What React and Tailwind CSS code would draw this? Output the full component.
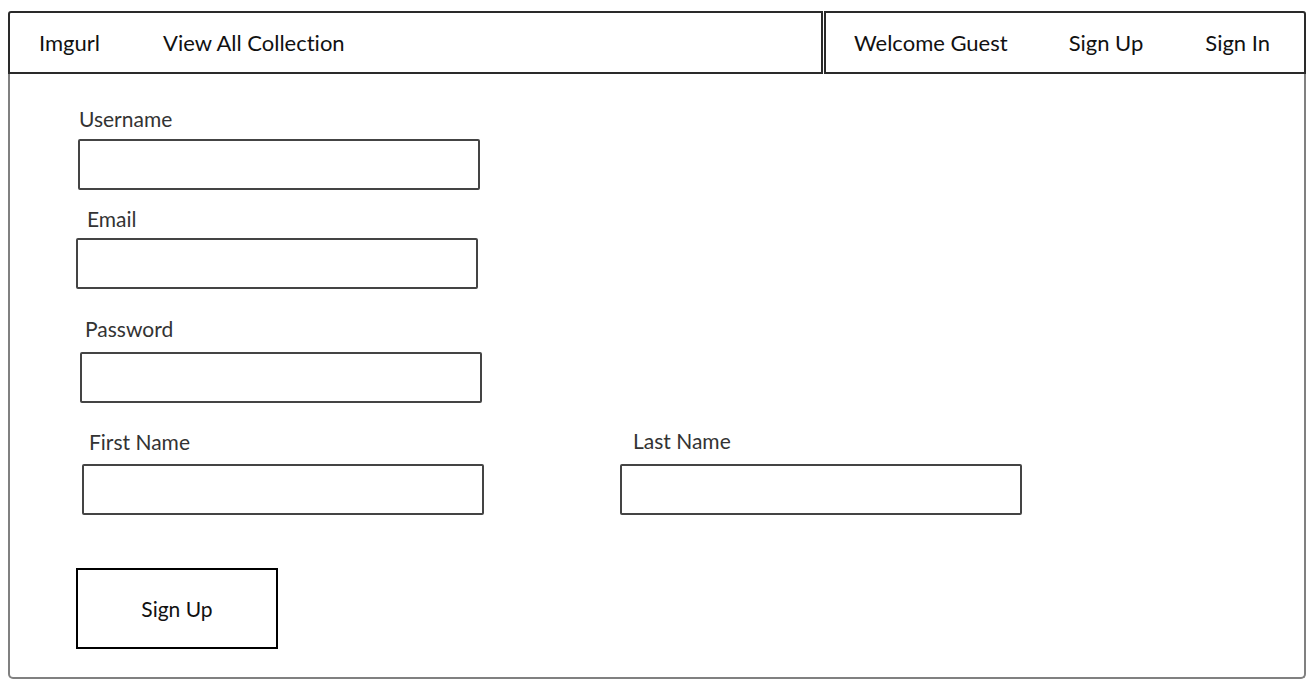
import React from 'react';

const Field = ({ label, labelClass, inputClass }) => (
  <div className="flex flex-col items-start">
    <label className={`text-[21px] leading-[26px] text-[#333] ${labelClass}`}>{label}</label>
    <div className={`w-[402px] h-[51px] border-2 border-[#444] rounded-[2px] bg-white ${inputClass}`}></div>
  </div>
);

const App = () => {
  return (
    <div
      className="w-[1316px] h-[684px] bg-white pt-[11px] pl-[8px] [font-variant-ligatures:none]"
      style={{ fontFamily: 'Lato, "Noto Sans", sans-serif' }}
    >
      <div className="w-[1298px] flex flex-col">
        {/* Nav */}
        <div className="flex h-[63px] gap-[1px] text-[22px] text-[#111]">
          <div className="w-[815px] border-2 border-[#2a2a2a] rounded-tl-[3px] flex items-center pl-[29px] gap-[63px]">
            <span>Imgurl</span>
            <span>View All Collection</span>
          </div>
          <div className="flex-1 border-2 border-[#2a2a2a] rounded-tr-[3px] flex items-center pl-[28px]">
            <span>Welcome Guest</span>
            <span className="ml-[61px]">Sign Up</span>
            <span className="ml-[62px]">Sign In</span>
          </div>
        </div>

        {/* Form body */}
        <div className="h-[605px] border-x-2 border-b-2 border-[#808080] rounded-b-[5px] flex flex-col items-start">
          <Field label="Username" labelClass="ml-[69px] mt-[32px]" inputClass="ml-[68px] mt-[7px]" />
          <Field label="Email" labelClass="ml-[77px] mt-[16px]" inputClass="ml-[66px] mt-[6px]" />
          <Field label="Password" labelClass="ml-[75px] mt-[27px]" inputClass="ml-[70px] mt-[10px]" />

          <div className="flex items-start mt-[25px]">
            <Field label="First Name" labelClass="ml-[79px] mt-[1px]" inputClass="ml-[72px] mt-[9px]" />
            <Field label="Last Name" labelClass="ml-[149px]" inputClass="ml-[136px] mt-[10px]" />
          </div>

          <button className="ml-[66px] mt-[53px] w-[202px] h-[81px] border-2 border-black bg-white text-[21px] text-[#111]">
            Sign Up
          </button>
        </div>
      </div>
    </div>
  );
};

export default App;
